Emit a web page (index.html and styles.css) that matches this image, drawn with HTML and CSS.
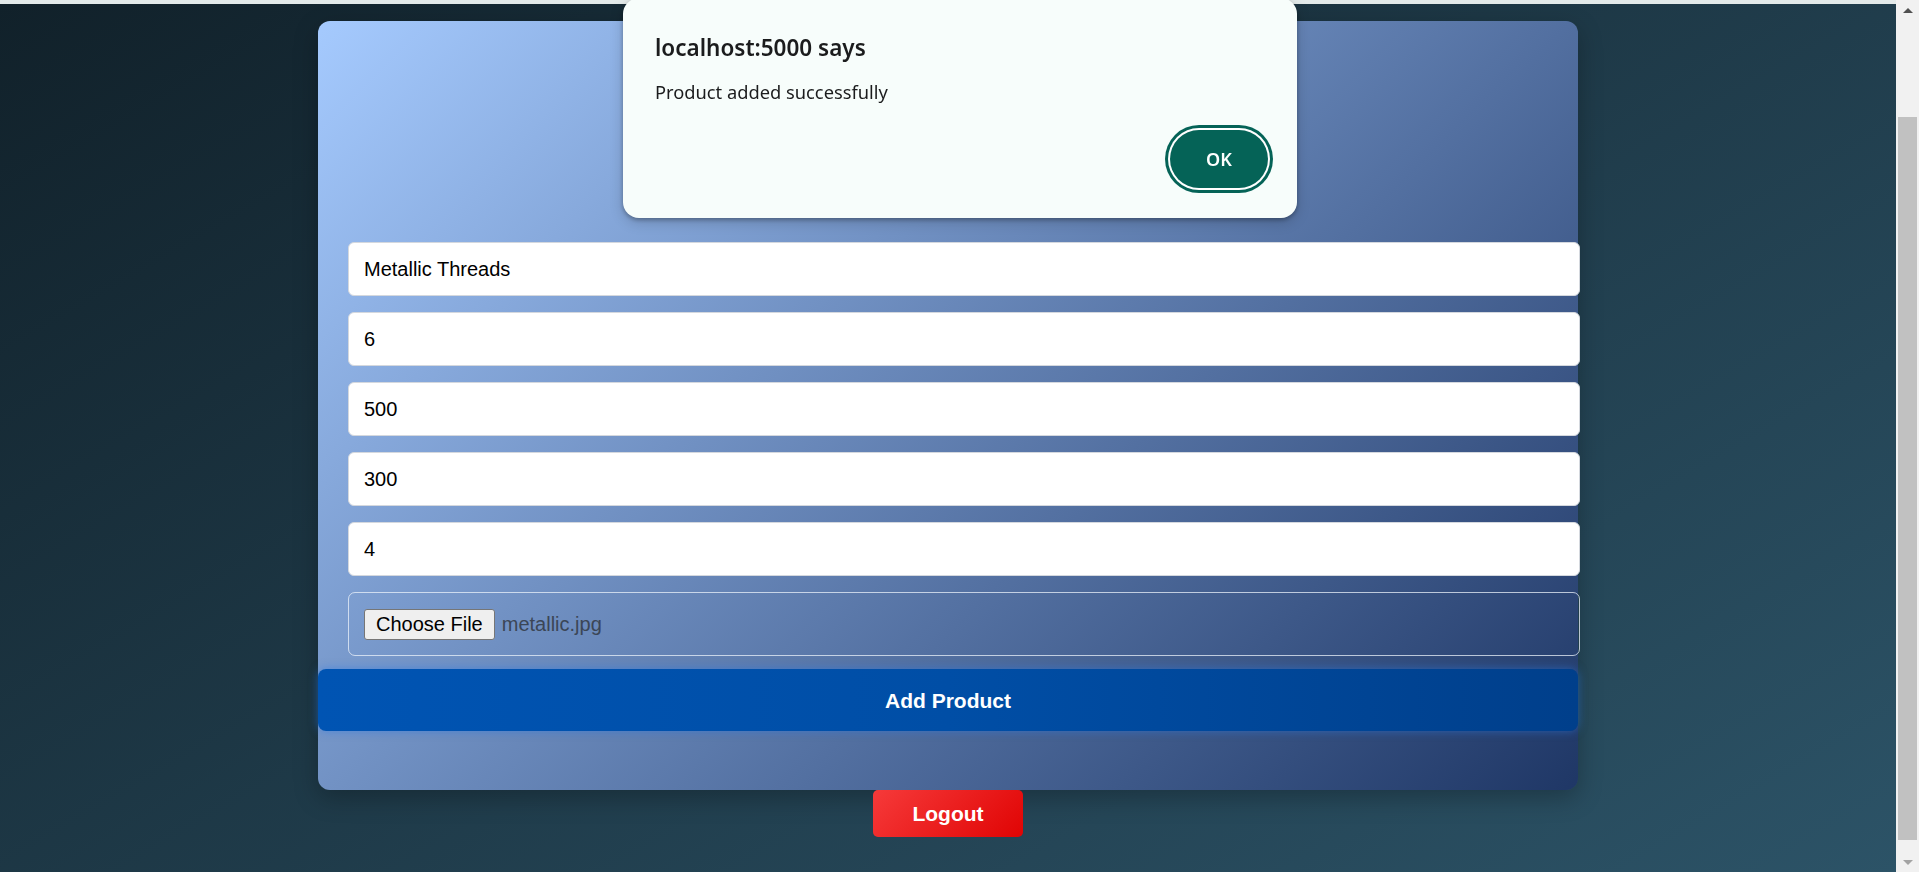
FILE: index.html
```html
<!DOCTYPE html>
<html lang="en">
<head>
<meta charset="utf-8">
<title>Add Product</title>
<link rel="stylesheet" href="styles.css">
</head>
<body>
  <div class="page">
    <div class="topbar"></div>
    <main class="content">
      <form class="card">
        <div class="card-head"></div>
        <input class="field" type="text" value="Metallic Threads">
        <input class="field" type="text" value="6">
        <input class="field" type="text" value="500">
        <input class="field" type="text" value="300">
        <input class="field" type="text" value="4">
        <div class="file-box">
          <span class="file-btn">Choose File</span>
          <span class="file-name">metallic.jpg</span>
        </div>
        <button class="add-btn" type="button">Add Product</button>
      </form>
      <button class="logout-btn" type="button">Logout</button>
    </main>
  </div>
  <div class="scrollbar">
    <div class="arrow-zone"><span class="arrow-up"></span></div>
    <div class="track"><div class="thumb"></div></div>
    <div class="arrow-zone"><span class="arrow-down"></span></div>
  </div>

  <div class="dialog" role="alertdialog">
    <div class="dialog-title">localhost:5000 says</div>
    <div class="dialog-msg">Product added successfully</div>
    <div class="dialog-actions">
      <button class="ok-btn" type="button">OK</button>
    </div>
  </div>
</body>
</html>
```

FILE: styles.css
```css
* { box-sizing: border-box; }

html, body {
  margin: 0;
  height: 100%;
}

body {
  display: flex;
  overflow: hidden;
  font-family: "Liberation Sans", Arial, sans-serif;
  background: #f1f1f1;
}

.page {
  flex: 1;
  display: flex;
  flex-direction: column;
  min-width: 0;
}

.topbar {
  height: 4px;
  background: #e3eaea;
  flex: none;
}

.content {
  flex: 1;
  display: flex;
  flex-direction: column;
  align-items: center;
  padding-top: 17px;
  background: linear-gradient(150deg, #11212a 0%, #2c5367 100%);
}

.card {
  width: 1260px;
  height: 769px;
  padding: 0 30px;
  border-radius: 12px;
  background: linear-gradient(135deg, #a5cafe 0%, #1f3766 100%);
  box-shadow: 0 8px 24px rgba(0, 0, 0, 0.25);
  display: flex;
  flex-direction: column;
  align-items: flex-start;
}

.card-head {
  height: 221px;
  flex: none;
}

.field {
  box-sizing: content-box;
  width: 100%;
  height: 24px;
  padding: 14px 15px;
  margin: 0 0 16px 0;
  border: 1px solid #d4d8de;
  border-radius: 6px;
  background: #fff;
  color: #000;
  font-family: "Liberation Sans", Arial, sans-serif;
  font-size: 20px;
  line-height: 24px;
  outline: none;
  flex: none;
}

.file-box {
  box-sizing: content-box;
  width: 100%;
  height: 32px;
  padding: 15px 15px;
  border: 1px solid rgba(235, 242, 250, 0.75);
  border-radius: 7px;
  display: flex;
  align-items: center;
  gap: 7px;
  flex: none;
}

.file-btn {
  height: 31px;
  padding: 0 11px;
  display: flex;
  align-items: center;
  background: #efefef;
  border: 1px solid #767676;
  border-radius: 3px;
  font-size: 20px;
  color: #000;
}

.file-name {
  font-size: 20px;
  color: #3b4656;
}

.add-btn {
  align-self: stretch;
  margin: 13px -30px 0;
  height: 62px;
  padding-top: 2px;
  border: none;
  border-radius: 8px;
  background: linear-gradient(90deg, #0054b3 0%, #004ea6 50%, #003f8b 100%);
  box-shadow: 0 0 10px rgba(40, 120, 230, 0.55);
  color: #fff;
  font-family: "Liberation Sans", Arial, sans-serif;
  font-weight: bold;
  font-size: 21px;
  flex: none;
}

.logout-btn {
  width: 150px;
  height: 47px;
  padding-top: 2px;
  border: none;
  border-radius: 5px;
  background: linear-gradient(135deg, #f63a3a 0%, #e00404 100%);
  color: #fff;
  font-family: "Liberation Sans", Arial, sans-serif;
  font-weight: bold;
  font-size: 21px;
  flex: none;
}

/* fake browser scrollbar */
.scrollbar {
  width: 23px;
  flex: none;
  display: flex;
  flex-direction: column;
  background: #f1f1f1;
}

.arrow-zone {
  height: 20px;
  display: flex;
  align-items: center;
  justify-content: center;
  flex: none;
}

.arrow-up {
  width: 0;
  height: 0;
  border-left: 5px solid transparent;
  border-right: 5px solid transparent;
  border-bottom: 5px solid #505050;
}

.arrow-down {
  width: 0;
  height: 0;
  border-left: 5px solid transparent;
  border-right: 5px solid transparent;
  border-top: 5px solid #a3a3a3;
}

.track {
  flex: 1;
  display: flex;
  flex-direction: column;
  padding: 97px 2px 12px;
}

.thumb {
  flex: 1;
  background: #c1c1c1;
}

/* alert dialog overlay */
.dialog {
  position: fixed;
  left: 623px;
  top: -2px;
  width: 674px;
  height: 220px;
  padding: 35px 29px 0 32px;
  background: #f7fdfb;
  border-radius: 16px;
  box-shadow: 0 2px 4px rgba(0, 0, 0, 0.28), 0 4px 14px rgba(0, 0, 0, 0.18);
  font-family: "Noto Sans", "Open Sans", sans-serif;
  color: #1b1c1d;
}

.dialog-title {
  font-size: 22.5px;
  font-weight: 600;
  line-height: 30px;
}

.dialog-msg {
  margin-top: 17px;
  font-size: 18.3px;
  line-height: 24px;
}

.dialog-actions {
  display: flex;
  justify-content: flex-end;
  margin-top: 26px;
}

.ok-btn {
  width: 98px;
  height: 58px;
  border: none;
  border-radius: 29px;
  background: #056357;
  box-shadow: 0 0 0 2px #ffffff, 0 0 0 5px #056357;
  color: #fff;
  font-family: "Noto Sans", "Open Sans", sans-serif;
  font-weight: 600;
  font-size: 18px;
}
```
